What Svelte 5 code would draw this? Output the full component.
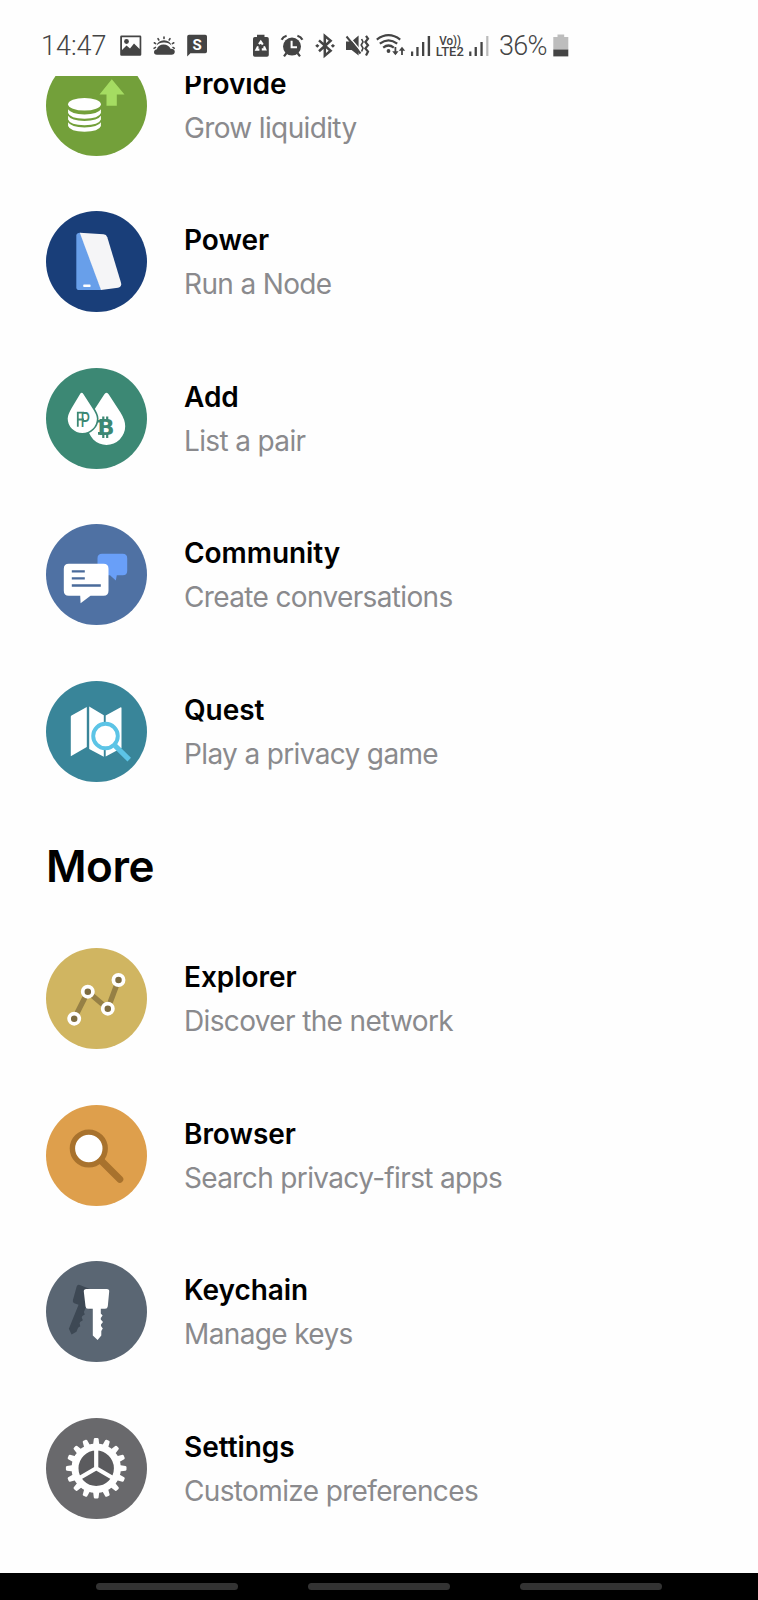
<script>
  const sections = [
    {
      heading: '',
      items: [
        { icon: 'provide', title: 'Provide', subtitle: 'Grow liquidity', color: '#73a03a' },
        { icon: 'power', title: 'Power', subtitle: 'Run a Node', color: '#193e79' },
        { icon: 'add', title: 'Add', subtitle: 'List a pair', color: '#3c8874' },
        { icon: 'community', title: 'Community', subtitle: 'Create conversations', color: '#4f71a3' },
        { icon: 'quest', title: 'Quest', subtitle: 'Play a privacy game', color: '#398599' },
      ],
    },
    {
      heading: 'More',
      items: [
        { icon: 'explorer', title: 'Explorer', subtitle: 'Discover the network', color: '#d0b561' },
        { icon: 'browser', title: 'Browser', subtitle: 'Search privacy-first apps', color: '#de9f4c' },
        { icon: 'keychain', title: 'Keychain', subtitle: 'Manage keys', color: '#5a6673' },
        { icon: 'settings', title: 'Settings', subtitle: 'Customize preferences', color: '#69696c' },
      ],
    },
  ]

  const nodes = [
    [28.2, 70.7],
    [41.8, 43.7],
    [61.8, 60.7],
    [72.5, 32],
  ]
  const teeth = Array.from({ length: 16 }, (_, i) => i * 22.5)
  const keyPath =
    'M40.3 28H60.8Q63.5 28 63.2 30.6L61.8 45.2Q61.5 47.7 59 47.7H54.8V52.5L56.6 54.6L54.8 57V58.6L57 61L55 63.6V65L56.8 67.6L55.3 70V74.6L51.6 79L46.8 74.6V47.7H42Q39.7 47.7 39.5 45.2L37.8 30.6Q37.6 28 40.3 28Z'
</script>

<div class="screen">
  <header class="status">
    <span class="time">14:47</span>
    <svg class="notifications" width="90" height="24" viewBox="0 0 90 24" fill="#444">
      <!-- picture -->
      <path fill-rule="evenodd" d="M3.5 1.5H22Q23.3 1.5 23.3 2.8V20.4Q23.3 21.7 22 21.7H3.5Q2.2 21.7 2.2 20.4V2.8Q2.2 1.5 3.5 1.5ZM4 3.2V16L8.5 11.5L12 14.5L16 9.5L21.6 15V3.2Z" />
      <circle cx="8.5" cy="7.5" r="2.4" />
      <!-- weather -->
      <g stroke="#444" stroke-width="1.6" stroke-linecap="round">
        <path d="M46 3V4.5M40 4.6L40.8 6M52 4.6L51.2 6M36.3 8.8L37.6 9.6M55.8 8.8L54.4 9.6" />
      </g>
      <path d="M38.5 11.5A7.6 6.3 0 0 1 53.5 11.5Q50.5 8.2 46 8.4Q41.5 8.2 38.5 11.5Z" />
      <path d="M39 20.8Q35.8 20.6 36 17.8Q36.3 15.6 38.8 15.2Q40.5 10.6 45.5 10.6Q50.8 10.8 52.5 14.8Q56.7 14.6 56.8 17.8Q56.6 20.8 53.5 20.8Z" />
      <path d="M35.5 14.7L38 13.2M56.8 14.7L54.5 13.2" stroke="#444" stroke-width="1.5" />
      <!-- messages -->
      <path d="M71 .8H87.3Q89 .8 89 2.5V17.6Q89 19.2 87.3 19.2H72.4L69.2 22.6V2.5Q69.2 .8 71 .8Z" />
      <text x="79.2" y="15.8" class="badge">S</text>
    </svg>

    <svg class="system" width="238" height="24" viewBox="0 0 238 24" fill="#444">
      <!-- battery saver -->
      <path d="M5 .8H12.5V3H15Q16.8 3 16.8 4.8V21Q16.8 22.8 15 22.8H2.8Q1 22.8 1 21V4.8Q1 3 2.8 3H5Z" />
      <path d="M7 10.2L8.8 7.6L10.8 10.6M12 12.4L13.3 15.4H9.8M7.4 15.6H4.4L6 12.4" fill="none" stroke="#fff" stroke-width="2.1" />
      <!-- alarm -->
      <circle cx="40" cy="12.6" r="9" />
      <path d="M29.6 5.8Q31 2.8 34.6 1.7M50.4 5.8Q49 2.8 45.4 1.7M34.5 19L32 22.4M45.5 19L48 22.4" fill="none" stroke="#444" stroke-width="2.2" />
      <path d="M39.6 6.8V13.2H45" fill="none" stroke="#fff" stroke-width="2" />
      <!-- bluetooth -->
      <path d="M67 6.4L78.6 16.8L72.8 21.6V1.9L78.6 6.7L67 17.2" fill="none" stroke="#444" stroke-width="2.5" />
      <path d="M63.2 11.8L65.3 9.9L67.4 11.8L65.3 13.7ZM78.8 11.8L80.9 9.9L83 11.8L80.9 13.7Z" />
      <!-- muted, vibrate -->
      <path d="M94 7.6H99.6L106.6 1.5V21.5L99.6 16H94Z" />
      <path d="M96 1.5L108.5 16.5" stroke="#fff" stroke-width="1.3" />
      <path d="M94.5 2.5L108.5 19.5" stroke="#444" stroke-width="2" />
      <path d="M114 1.8L116 4.8L113.4 8L116 11.2L113.4 14.4L116 17.6L114 21.4" fill="none" stroke="#444" stroke-width="2.2" />
      <path d="M109.6 5L111 8L109.2 11L111 14L109.6 17.5" fill="none" stroke="#444" stroke-width="1.6" />
      <!-- wifi -->
      <g fill="none" stroke="#444" stroke-width="2.2">
        <path d="M124.8 5.6Q136.5-3.2 148.2 5.6M127.8 9.7Q136.5 3 145.2 9.7M131.2 13.6Q136.5 9.4 141.8 13.6" />
        <path d="M143.4 13V19.8M150 21V14.2" stroke-width="1.8" />
      </g>
      <circle cx="136.5" cy="17" r="1.9" />
      <path d="M140.2 17.2H146.6L143.4 21.2ZM146.8 16.8H153.2L150 12.8Z" />
      <!-- sim 1 -->
      <path d="M159 17.4H161.2V22H159ZM164.3 13H166.6V22H164.3ZM170 8H172.3V22H170ZM175.7 2H178.1V22H175.7Z" />
      <text x="187.2" y="11" class="volte" textLength="22" lengthAdjust="spacingAndGlyphs">Vo))</text>
      <text x="183.8" y="22.4" class="volte" textLength="28" lengthAdjust="spacingAndGlyphs">LTE2</text>
      <!-- sim 2 -->
      <path d="M217.2 17.4H219.4V22H217.2ZM222.6 13H224.9V22H222.6ZM228.4 8H230.7V22H228.4Z" />
      <path d="M234.2 2H236.4V22H234.2Z" fill="#bbb" />
    </svg>
    <span class="percent">36%</span>
    <svg class="battery" width="16" height="24" viewBox="0 0 16 24">
      <path d="M4.5 .4H11.2V3H15.3V16H.3V3H4.5Z" fill="#bdbdbd" />
      <path d="M.3 15.6H15.3V22.4H.3Z" fill="#444" />
    </svg>
  </header>

  <main>
    <div class="scroll">
      {#each sections as section}
        <section>
          {#if section.heading}
            <h2>{section.heading}</h2>
          {/if}
          {#each section.items as item}
            <div class="row">
              <svg class="icon" width="101" height="101" viewBox="0 0 101 101">
                <circle cx="50.5" cy="50.5" r="50.5" fill={item.color} />
                {#if item.icon === 'provide'}
                  <ellipse cx="38.5" cy="49.2" rx="16.4" ry="6.3" fill="#fff" />
                  {#each [54.2, 60.7, 67.2] as y}
                    <path d="M22.1 {y}Q25 {y + 5} 38.5 {y + 5.2}Q52 {y + 5} 54.9 {y}V{y + 3.8}Q53 {y + 9.5} 38.5 {y + 9.5}Q24 {y + 9.5} 22.1 {y + 3.8}Z" fill="#fff" />
                  {/each}
                  <path d="M65.8 24.3L78.5 39.5H70.8V50.7H60.5V39.5H53.5Z" fill="#a5dc62" />
                {:else if item.icon === 'power'}
                  <path d="M30.3 24.5Q30.5 21.6 34.5 21.7L55.5 79H33Q30.3 79 30.3 76.2Z" fill="#689fea" />
                  <path d="M33.8 21.7L57.5 23.3Q60.4 23.5 61.3 26.2L75 71.8Q76 76 72 76.8L55 79Z" fill="#f5f5f7" />
                  <rect x="37.2" y="73.6" width="7.4" height="2.5" rx=".8" fill="#fff" />
                {:else if item.icon === 'add'}
                  <path d="M60.5 24.7Q61.8 24.7 62.8 26.4L74.5 44.5Q79.2 52 79.2 58.2A18.7 18.7 0 0 1 41.8 58.2Q41.8 52 46.5 44.5L58.2 26.4Q59.2 24.7 60.5 24.7Z" fill="#fff" />
                  <path d="M35.7 23.9Q37 23.9 38 25.5L47 39.5Q51.7 46.5 51.7 50.4A15.4 15.4 0 0 1 20.9 50.4Q20.9 46.5 25 39.5L33.4 25.5Q34.4 23.9 35.7 23.9Z" fill="#fff" stroke={item.color} stroke-width="1.6" />
                  <text x="34.4" y="58.7" class="pcoin" fill={item.color} textLength="9.5" lengthAdjust="spacingAndGlyphs">P</text>
                  <path d="M31.8 43.8V58.7M31 44.6H38M31 51.5H38" stroke={item.color} stroke-width="1.8" />
                  <text x="51.6" y="66.6" class="bcoin" fill={item.color} textLength="17" lengthAdjust="spacingAndGlyphs">B</text>
                  <path d="M52 53.2H56M52 65.4H56" stroke={item.color} stroke-width="2.6" />
                  <path d="M57.3 48.4V53M61.2 48.4V53M57.3 65.5V70M61.2 65.5V70" stroke={item.color} stroke-width="2.2" />
                {:else if item.icon === 'community'}
                  <path d="M56 29.7H76.7Q81.2 29.7 81.2 34.2V46.8Q81.2 51.3 76.7 51.3H70.8L69.8 56.4L64 51.3H56Q51.5 51.3 51.5 46.8V34.2Q51.5 29.7 56 29.7Z" fill="#699ff8" />
                  <path d="M22.8 39.7H57.5Q62.5 39.7 62.5 44.7V66.7Q62.5 71.7 57.5 71.7H44.5L34.6 79.3L34.2 71.7H22.8Q17.8 71.7 17.8 66.7V44.7Q17.8 39.7 22.8 39.7Z" fill="#fff" />
                  <path d="M25.8 47.4H38.8M25.8 54.4H38.8M25.8 61.5H54.8" stroke="#4a6b9b" stroke-width="2.4" />
                {:else if item.icon === 'quest'}
                  <path d="M24.8 35.8Q24.8 35 25.5 34.6L40.8 26V66L24.8 75.2ZM43.2 25.6L57.8 34.2V75.8L43.2 68ZM59.7 34.4L74.3 26.4Q75.5 26 75.5 27V67L59.7 75.4Z" fill="#fff" />
                  <path d="M69 64.6L83.2 78.6" stroke="#5cc4e6" stroke-width="5" />
                  <circle cx="59.5" cy="55" r="12.3" fill="#fff" stroke="#5cc4e6" stroke-width="3.9" />
                {:else if item.icon === 'explorer'}
                  <polyline points={nodes.map((n) => n.join(',')).join(' ')} fill="none" stroke="#968045" stroke-width="5.4" />
                  {#each nodes as [cx, cy]}
                    <circle {cx} {cy} r="5.1" fill="#7d6c41" stroke="#fff" stroke-width="3.7" />
                  {/each}
                {:else if item.icon === 'browser'}
                  <path d="M56 56.5L73.8 74.2" stroke="#a8722d" stroke-width="7" stroke-linecap="round" />
                  <circle cx="42.8" cy="43.5" r="16.4" fill="#fff" stroke="#a8722d" stroke-width="5.4" />
                {:else if item.icon === 'keychain'}
                  <path d={keyPath} fill="#3d4854" transform="translate(25.2 73.3) rotate(22) scale(.96) translate(-51.2 -79)" />
                  <path d={keyPath} fill="#fff" />
                {:else if item.icon === 'settings'}
                  {#each teeth as angle}
                    <path d="M47 27.5L47.8 21Q48 20 49 20H51.4Q52.4 20 52.6 21L53.4 27.5Z" fill="#fff" transform="rotate({angle} 50.2 50.3)" />
                  {/each}
                  <circle cx="50.2" cy="50.3" r="21.2" fill="#5b5b5e" stroke="#fff" stroke-width="7" />
                  <path d="M50.2 31V50.3L33.5 60M50.2 50.3L66.9 60" fill="none" stroke="#fff" stroke-width="4.2" />
                {/if}
              </svg>
              <div class="label">
                <div class="title">{item.title}</div>
                <div class="subtitle">{item.subtitle}</div>
              </div>
            </div>
          {/each}
        </section>
      {/each}
    </div>
  </main>

  <nav>
    <span></span>
    <span></span>
    <span></span>
  </nav>
</div>

<style>
  :global(body) {
    background: #fefefe;
  }

  .screen {
    display: flex;
    flex-direction: column;
    width: 758px;
    height: 1600px;
    overflow: hidden;
    background: #fefefe;
    font-family: Inter, sans-serif;
  }

  .status {
    display: flex;
    flex: none;
    height: 42px;
    padding: 34px 0 0 41px;
    color: #444;
    font-family: Roboto, sans-serif;
    font-size: 27px;
    font-weight: 300;
    line-height: 25px;
    white-space: nowrap;
  }
  .status svg {
    flex: none;
    overflow: visible;
  }
  .time {
    width: 77px;
  }
  .system {
    margin-left: 44px;
  }
  .percent {
    width: 54px;
    margin-left: 9px;
    letter-spacing: -0.7px;
  }
  .badge {
    fill: #fff;
    font-size: 15px;
    font-weight: 700;
    text-anchor: middle;
  }
  .volte {
    font-size: 12px;
    font-weight: 500;
  }

  main {
    flex: 1;
    min-height: 0;
    overflow: hidden;
  }
  .scroll {
    margin-top: -49.3px;
  }
  h2 {
    height: 110.6px;
    margin: 0;
    padding-left: 46px;
    font-size: 44px;
    font-weight: 600;
    line-height: 112px;
    letter-spacing: -0.5px;
  }
  .row {
    display: flex;
    align-items: center;
    height: 156.6px;
    padding-left: 46px;
  }
  .icon {
    flex: none;
  }
  .label {
    padding-top: 1px;
    margin-left: 37px;
    line-height: 44px;
    white-space: nowrap;
  }
  .title {
    color: #000;
    font-size: 28px;
    font-weight: 600;
    letter-spacing: -0.05px;
  }
  .subtitle {
    color: #8a8a8d;
    font-size: 28px;
    letter-spacing: -0.64px;
  }
  .pcoin {
    font-family: Inter, sans-serif;
    font-size: 20.4px;
    font-weight: 500;
  }
  .bcoin {
    font-family: 'DejaVu Sans', sans-serif;
    font-size: 20.5px;
    font-weight: 700;
  }

  nav {
    display: flex;
    flex: none;
    gap: 70px;
    height: 27px;
    padding-left: 95.5px;
    background: #000;
  }
  nav span {
    width: 142px;
    height: 7px;
    margin-top: 10px;
    border-radius: 4px;
    background: #333;
  }
</style>
